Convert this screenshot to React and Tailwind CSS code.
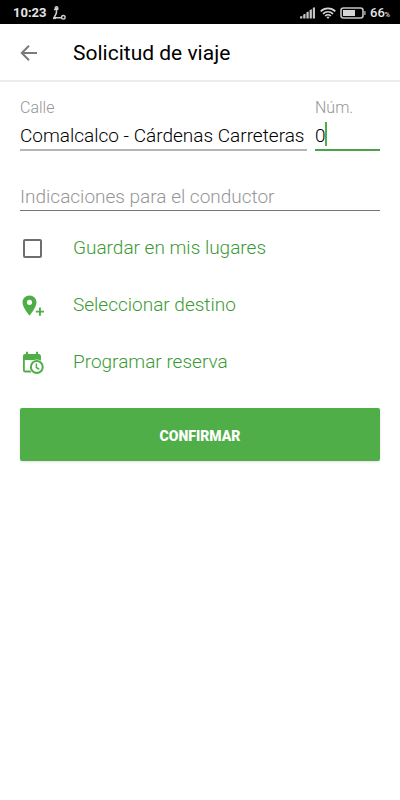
import { useState } from "react";

const SignalIcon = () => (
    <svg className="w-4 h-3" viewBox="0 0 16 12" fill="#c4c4c4" aria-hidden="true">
        <path d="M0 9.500 2.300 9v2.500H0zM3.200 7.500l2.300-.8v4.800H3.200zM6.400 5.300l2.300-.8v7H6.400zM9.600 3l2.300-.8v9.300H9.600zM12.800.8l2.200-.5v11.200h-2.200z" />
    </svg>
)

const WifiIcon = () => (
    <svg className="w-4 h-3" viewBox="0 0 16 12" fill="none" stroke="#d4d4d4" strokeWidth="1.700" aria-hidden="true">
        <path d="M.7 4.300a10.400 10.400 0 0 1 14.600 0M3 6.800a7.100 7.100 0 0 1 10 0M5.200 9a4 4 0 0 1 5.600 0" />
        <path d="M6.300 9.800h3.400L8 12z" fill="#d4d4d4" stroke="none" />
    </svg>
)

const BatteryIcon = () => (
    <svg className="w-[26px] h-3" viewBox="0 0 26 12" aria-hidden="true">
        <rect x="1" y="1" width="22" height="10" rx="2.500" fill="none" stroke="#c4c4c4" strokeWidth="1.600" />
        <rect x="3" y="3" width="12" height="6" fill="#d4d4d4" />
        <path d="M24.300 4h1.200v4h-1.200z" fill="#c4c4c4" />
    </svg>
)

// kick scooter shown next to the clock
const ScooterIcon = () => (
    <svg className="w-[13px] h-[14px]" viewBox="0 0 13 14" fill="none" stroke="#cfcfcf" aria-hidden="true">
        <path d="M1.200 4 3.500 2 5.200 3.600M3.500 2 3.400 7 1 11.800h7.200" strokeWidth="1.600" />
        <circle cx="3.500" cy="2" r="1.400" strokeWidth="1.200" />
        <circle cx="10.300" cy="11.300" r="1.800" strokeWidth="1.400" />
        <path d="M0 12.300h3" strokeWidth="1.600" />
    </svg>
)

const PinPlusIcon = () => (
    <svg className="w-6 h-6" viewBox="0 0 24 24" fill="#4fae47" aria-hidden="true">
        <path fillRule="evenodd" d="M9.500 1.500C5.500 1.500 2.500 4.500 2.500 8.400c0 5 7 13.100 7 13.100s7-8.100 7-13.100c0-3.900-3-6.900-7-6.900zm0 9.400a2.600 2.600 0 1 1 0-5.200 2.600 2.600 0 0 1 0 5.200z" />
        <path d="M19 13.500h1.900v3.200H24v1.800h-3.100v3.200H19v-3.200h-3.200v-1.800H19z" />
    </svg>
)

const CalendarClockIcon = () => (
    <svg className="w-6 h-6" viewBox="0 0 24 24" fill="none" stroke="#4fae47" aria-hidden="true">
        <path d="M11 20.500H5.200a1.300 1.300 0 0 1-1.300-1.300V5.500h16V11" strokeWidth="1.800" />
        <path d="M3 5A2 2 0 0 1 5 3h13.800a2 2 0 0 1 2 2v4H3z" fill="#4fae47" stroke="none" />
        <path d="M7 .8v3M17 .8v3" strokeWidth="2" />
        <circle cx="16.800" cy="16" r="7.400" fill="#fff" stroke="none" />
        <circle cx="16.800" cy="16" r="5.900" strokeWidth="2" />
        <path d="M16.400 12.500v4l2.900 1.800" strokeWidth="1.500" />
    </svg>
)

const StatusBar = () => (
    <div className="flex items-center justify-between h-6 bg-black pl-[13px] pr-[10px] pt-px text-[#e4e4e4]">
        <div className="flex items-center gap-[6px] text-[13px] font-bold">
            <span>10:23</span>
            <ScooterIcon />
        </div>
        <div className="flex items-center gap-1">
            <SignalIcon />
            <WifiIcon />
            <BatteryIcon />
            <span className="text-[13px] font-medium">66<span className="text-[7px]">%</span></span>
        </div>
    </div>
)

const App = () => {
    const [formData, setFormData] = useState({
        calle: "Comalcalco - Cárdenas Carreteras",
        num: "0",
        indicaciones: "",
        guardar: false
    });

    const { calle, num, indicaciones, guardar } = formData;

    const onChange = e => setFormData({ ...formData, [e.target.name]: e.target.value });

    const onSubmit = e => e.preventDefault();

    return (
        <div className="min-h-screen bg-white font-['Roboto',sans-serif]">
            <StatusBar />
            <header className="flex items-center h-[58px] pt-1 pl-5 border-b-2 border-[#ececec]">
                <button type="button" className="w-[53px] pb-[3px]">
                    <svg className="w-[18px] h-[18px]" viewBox="0 0 18 18" fill="none" stroke="#7b7b7b" strokeWidth="2" aria-hidden="true">
                        <path d="M17 9H2.500M9 1.800 1.800 9 9 16.200" />
                    </svg>
                </button>
                <h1 className="text-[21px] font-normal text-black">Solicitud de viaje</h1>
            </header>

            <form onSubmit={onSubmit} className="px-5 pt-4">
                <div className="flex gap-2">
                    <div className="flex-1 min-w-0">
                        <label htmlFor="calle" className="block text-base leading-5 font-[350] text-[#969696]">Calle</label>
                        <input
                            id="calle"
                            name="calle"
                            value={calle}
                            onChange={onChange}
                            className="block w-full h-[33px] pt-1 border-b-2 border-[#b5b5b5] text-[19px] font-[350] text-black outline-none"
                        />
                    </div>
                    <div className="w-[65px]">
                        <label htmlFor="num" className="block text-base leading-5 font-[350] text-[#969696]">Núm.</label>
                        <div className="relative">
                            <input
                                id="num"
                                name="num"
                                value={num}
                                onChange={onChange}
                                className="block w-full h-[33px] pt-1 border-b-2 border-[#4fa04a] text-[19px] font-[350] text-black caret-transparent outline-none"
                            />
                            <span className="absolute left-[10px] top-1 w-[2px] h-6 bg-[#4fae47]" />
                        </div>
                    </div>
                </div>

                <input
                    name="indicaciones"
                    aria-label="Indicaciones para el conductor"
                    placeholder="Indicaciones para el conductor"
                    value={indicaciones}
                    onChange={onChange}
                    className="block w-full h-8 mt-7 pt-1 border-b border-[#757575] text-[19px] font-[350] text-black placeholder:text-[#969696] outline-none"
                />

                <div className="mt-[9px] text-[19px] font-[350] text-[#3b9a34]">
                    <label className="flex items-center h-[57px]">
                        <span className="flex w-[53px] pl-[3px]">
                            <input
                                type="checkbox"
                                checked={guardar}
                                onChange={e => setFormData({ ...formData, guardar: e.target.checked })}
                                className="appearance-none w-[19px] h-[19px] border-2 border-[#6e6e6e] rounded-xs checked:bg-[#4fae47]"
                            />
                        </span>
                        Guardar en mis lugares
                    </label>
                    <button type="button" className="flex items-center w-full h-[57px]">
                        <span className="w-[53px]"><PinPlusIcon /></span>
                        Seleccionar destino
                    </button>
                    <button type="button" className="flex items-center w-full h-[57px]">
                        <span className="w-[53px]"><CalendarClockIcon /></span>
                        Programar reserva
                    </button>
                </div>

                <button type="submit" className="w-full h-[53px] mt-[17px] pt-[2px] rounded-xs bg-[#4fae47] text-sm font-black text-white shadow-sm">
                    CONFIRMAR
                </button>
            </form>
        </div>
    )
}

export default App
